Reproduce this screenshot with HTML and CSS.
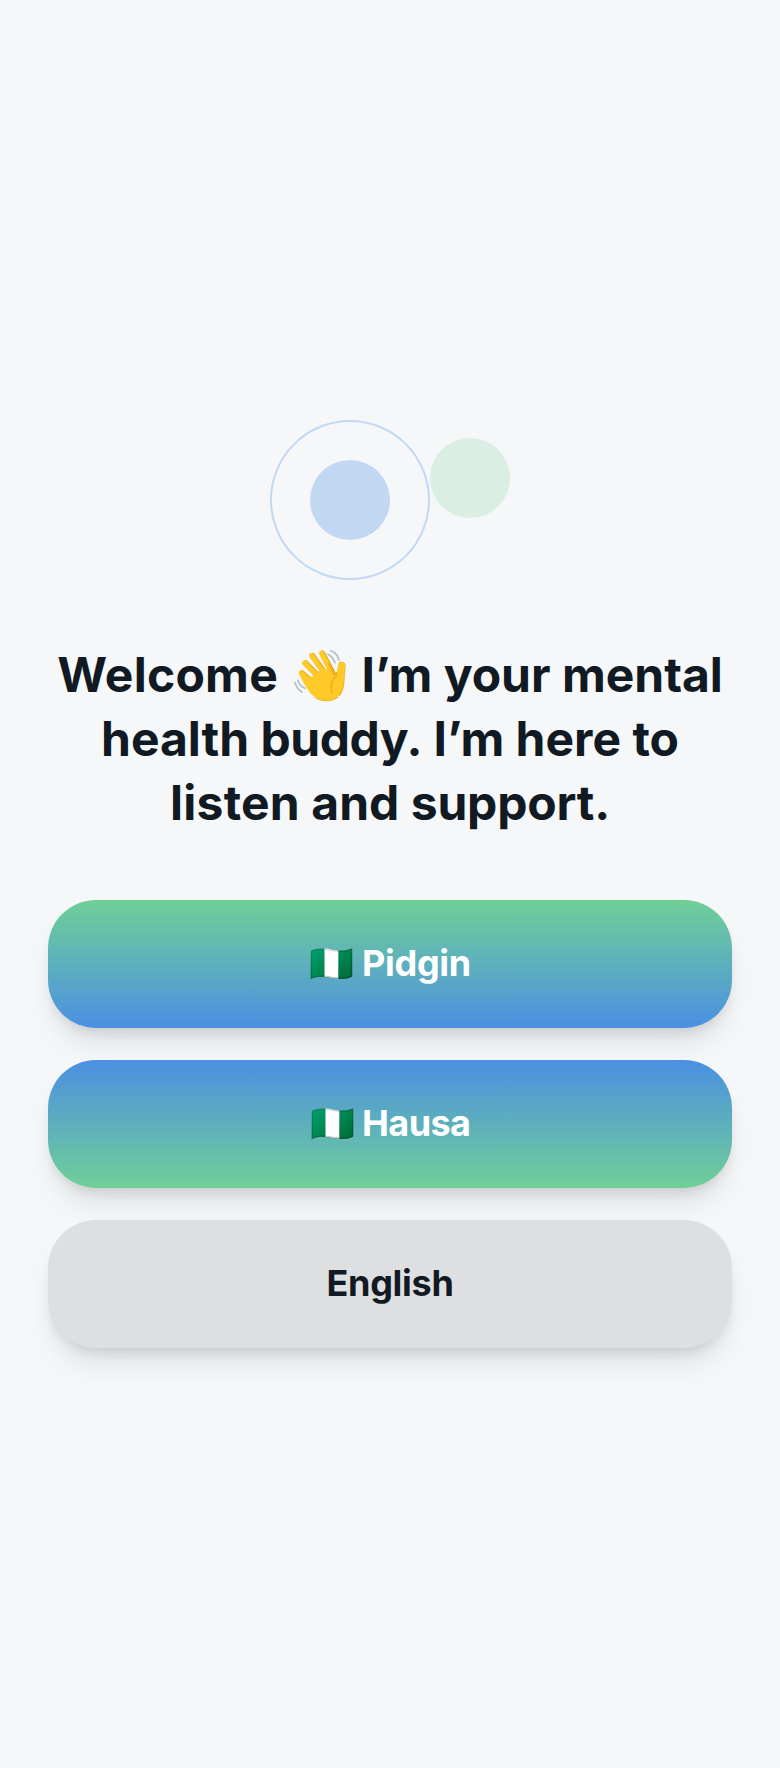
FILE: index.html
```html
<!DOCTYPE html>
<html lang="en">
<head>
<meta charset="utf-8">
<title>Welcome</title>
<link rel="stylesheet" href="styles.css">
</head>
<body>
<main class="screen">
  <svg class="illustration" width="240" height="160" viewBox="0 0 240 160" aria-hidden="true">
    <circle cx="80" cy="80" r="79" fill="none" stroke="#c2d8f3" stroke-width="2"/>
    <circle cx="80" cy="80" r="40" fill="#c2d8f2"/>
    <circle cx="200" cy="58" r="40" fill="#daeee3"/>
  </svg>
  <h1 class="title">
    <span class="loose">Welcome</span>
    <svg class="wave" viewBox="0 0 198 210" role="img" aria-label="waving hand">
      <g fill="none" stroke-linecap="round">
        <g stroke="#e8a314" stroke-width="17">
          <path d="M45 99 84 134M55 69 97 112M76 47 112 97M106 40 138 101"/>
        </g>
        <g stroke="#ffca28" stroke-width="15">
          <path d="M43 99 84 136M53 69 95 112M74 47 110 97M104 40 136 103"/>
        </g>
        <g stroke="#b0bec5" stroke-width="5">
          <path d="M122 42Q136 49 144 68M132 32Q150 39 156 60M33 121Q37 137 54 145M24 127Q29 147 45 156"/>
        </g>
      </g>
      <path fill="#eda91b" d="M155 69C160 64 168 64 173 69C179 76 173 94 173 110C173 138 168 161 150 175C128 189 100 186 82 172L155 170Z"/>
      <path fill="#ffca28" d="M37 104L76 110L82 98L104 90L130 86L148 105C152 95 150 76 156 70C161 65 169 66 173 72C176 79 171 94 171 110C170 139 165 159 148 172C128 187 100 184 81 169C66 158 53 135 37 104Z"/>
      <g fill="none" stroke="#eda91b" stroke-width="4" stroke-linecap="round">
        <path d="M125 72L142 103Q149 108 149 98M149 108C132 120 129 139 136 159"/>
        <path d="M92 58L110 84M70 74L91 96M56 103L71 116" stroke-width="2.5"/>
      </g>
    </svg>
    I’m your mental<br>
    health <span class="tight">buddy.</span> I’m here to<br>
    <span class="loose">listen</span> and <span class="snug">support.</span>
  </h1>
  <div class="languages">
    <button class="language pidgin">🇳🇬 Pidgin</button>
    <button class="language hausa">🇳🇬 Hausa</button>
    <button class="language english">English</button>
  </div>
</main>
</body>
</html>
```

FILE: styles.css
```css
* { box-sizing: border-box; }
body { margin: 0; background: #f5f7f9; font-family: Inter, sans-serif; color: #111a22; }
.screen { height: 1768px; padding: 0 48px; display: flex; flex-direction: column; align-items: center; justify-content: center; }
.illustration { display: block; margin-bottom: 63px; }
.title { margin: 0 0 65px; font-size: 48px; line-height: 64px; font-weight: 700; text-align: center; white-space: nowrap; }
.loose { letter-spacing: .25px; }
.snug { letter-spacing: -.2px; }
.tight { letter-spacing: -.45px; }
.wave { width: 66px; height: 70px; margin: -20px -2.5px -18px -2.8px; vertical-align: baseline; }
.languages { width: 100%; display: flex; flex-direction: column; gap: 32px; }
.language { height: 128px; padding: 0 0 2px; border: 0; border-radius: 48px; font: 700 36px/48px Inter, sans-serif; letter-spacing: -.3px; color: #fff; box-shadow: 0 20px 30px -6px rgba(0, 0, 0, .1), 0 8px 12px -4px rgba(0, 0, 0, .1); }
.pidgin { background: linear-gradient(#70cf97, #4a90e2); }
.hausa { background: linear-gradient(#4a90e2, #70cf97); letter-spacing: -.55px; }
.english { background: rgba(0, 0, 0, .095); color: #111a22; }
```
